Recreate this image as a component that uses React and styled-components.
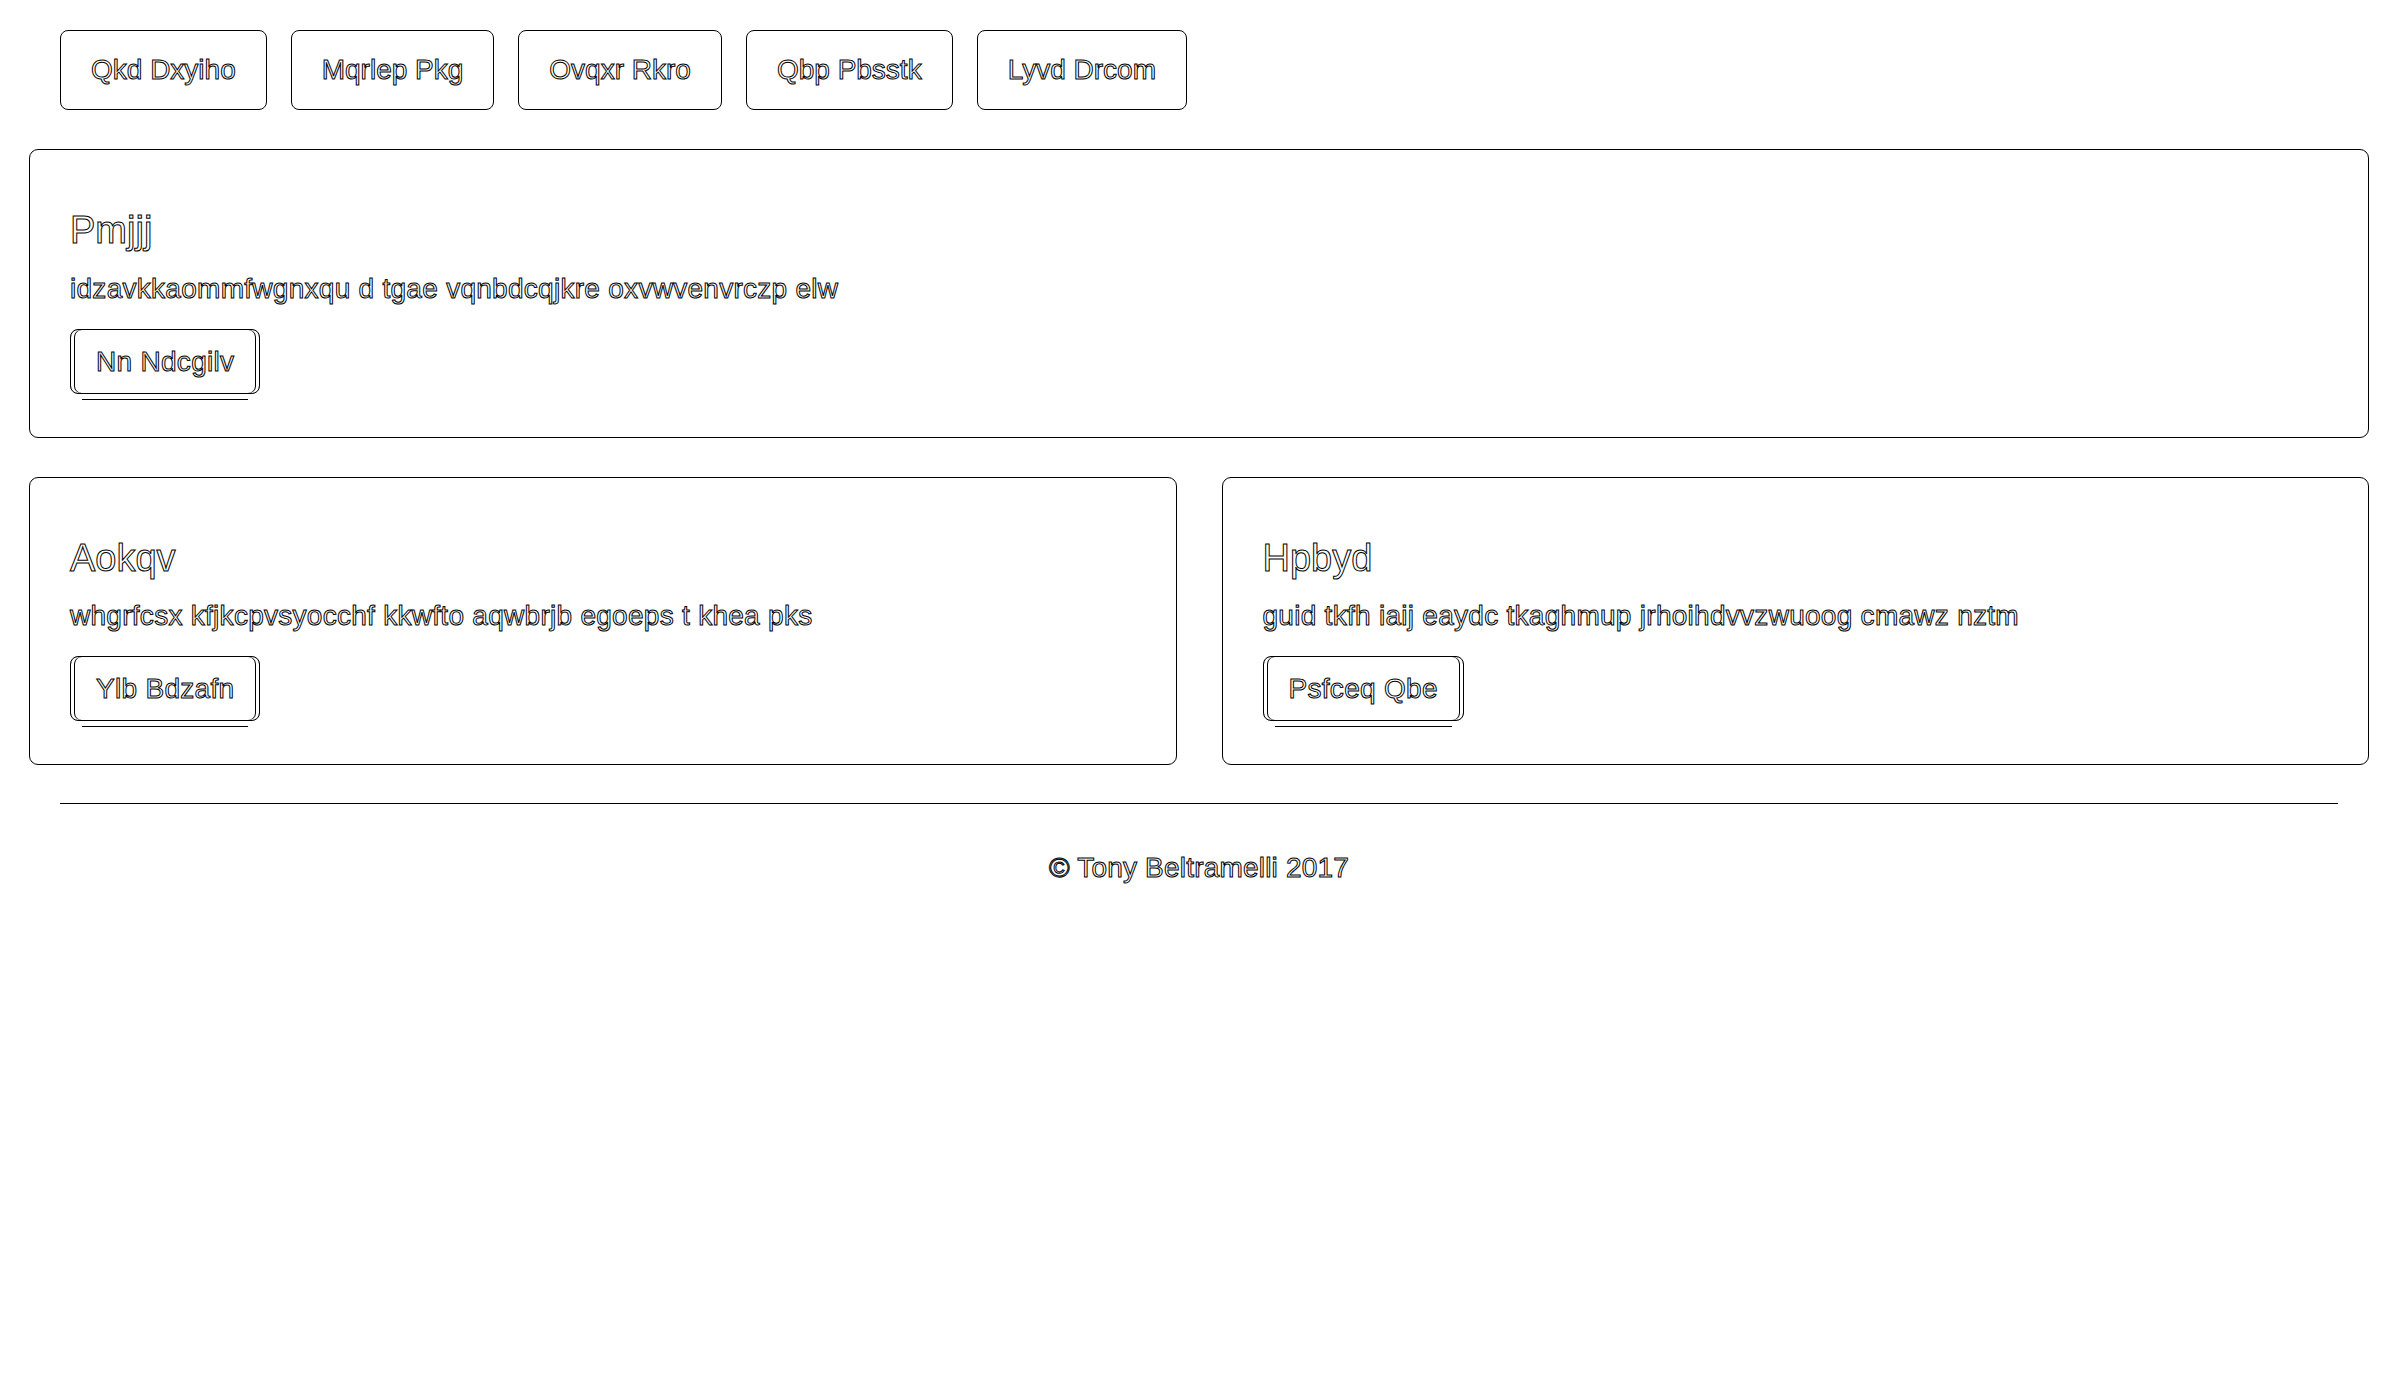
import styled, { createGlobalStyle } from "styled-components";

const GlobalStyle = createGlobalStyle`
    html, body {
        margin: 0;
        padding: 0;
        background: #fff;
    }
    body {
        font-family: "Liberation Sans", Arial, Helvetica, sans-serif;
        font-size: 28px;
        line-height: 40px;
        letter-spacing: 0.2px;
        color: #fff;
        -webkit-text-stroke: 1px #000;
    }
`;

const Page = styled.div`
    padding: 30px 31px 40px 29px;
`;

const Nav = styled.nav`
    display: flex;
    gap: 24px;
    padding: 0 31px;
    margin-bottom: 39px;
`;

const NavButton = styled.a`
    display: flex;
    align-items: center;
    height: 80px;
    box-sizing: border-box;
    padding: 0 30px;
    border: 1px solid #000;
    border-radius: 8px;
    background: #fff;
    letter-spacing: 0;
    cursor: pointer;
`;

const Well = styled.section`
    border: 1px solid #000;
    border-radius: 9px;
    padding: 39px 40px 38px;
    background: #fff;
`;

const Columns = styled.div`
    display: grid;
    grid-template-columns: 1fr 1fr;
    gap: 45px;
    margin-top: 39px;
`;

const Title = styled.h4`
    margin: 22px 0 18px;
    font-size: 38px;
    font-weight: 400;
    line-height: 39.6px;
    letter-spacing: 0;
`;

const Text = styled.p`
    margin: 0 0 20px;
    letter-spacing: 0.28px;
`;

const ActionButton = styled.button`
    display: block;
    height: 65px;
    box-sizing: border-box;
    margin-bottom: 5px;
    padding: 0 25px;
    border: 1px solid #000;
    border-radius: 8px;
    background: #fff;
    font: inherit;
    line-height: 63px;
    letter-spacing: 0.3px;
    color: #fff;
    -webkit-text-stroke: 1px #000;
    box-shadow:
        inset 3px 0 0 #fff,
        inset 4px 0 0 #000,
        inset -3px 0 0 #fff,
        inset -4px 0 0 #000,
        0 17px 0 -12px #fff,
        0 18px 0 -12px #000;
`;

const Rule = styled.hr`
    margin: 38px 31px 0;
    border: 0;
    border-top: 1px solid #000;
`;

const Footer = styled.footer`
    margin-top: 44px;
    text-align: center;
`;

const navItems = ["Qkd Dxyiho", "Mqrlep Pkg", "Ovqxr Rkro", "Qbp Pbsstk", "Lyvd Drcom"];

const cards = [
    {
        title: "Aokqv",
        text: "whgrfcsx kfjkcpvsyocchf kkwfto aqwbrjb egoeps t khea pks",
        action: "Ylb Bdzafn",
    },
    {
        title: "Hpbyd",
        text: "guid tkfh iaij eaydc tkaghmup jrhoihdvvzwuoog cmawz nztm",
        action: "Psfceq Qbe",
    },
];

function Card({ title, text, action }) {
    return (
        <Well>
            <Title>{title}</Title>
            <Text>{text}</Text>
            <ActionButton>{action}</ActionButton>
        </Well>
    );
}

export default function App() {
    return (
        <>
            <GlobalStyle />
            <Page>
                <Nav>
                    {navItems.map((item) => (
                        <NavButton key={item}>{item}</NavButton>
                    ))}
                </Nav>
                <Card
                    title="Pmjjj"
                    text="idzavkkaommfwgnxqu d tgae vqnbdcqjkre oxvwvenvrczp elw"
                    action="Nn Ndcgilv"
                />
                <Columns>
                    {cards.map((card) => (
                        <Card key={card.title} {...card} />
                    ))}
                </Columns>
                <Rule />
                <Footer>© Tony Beltramelli 2017</Footer>
            </Page>
        </>
    );
}
